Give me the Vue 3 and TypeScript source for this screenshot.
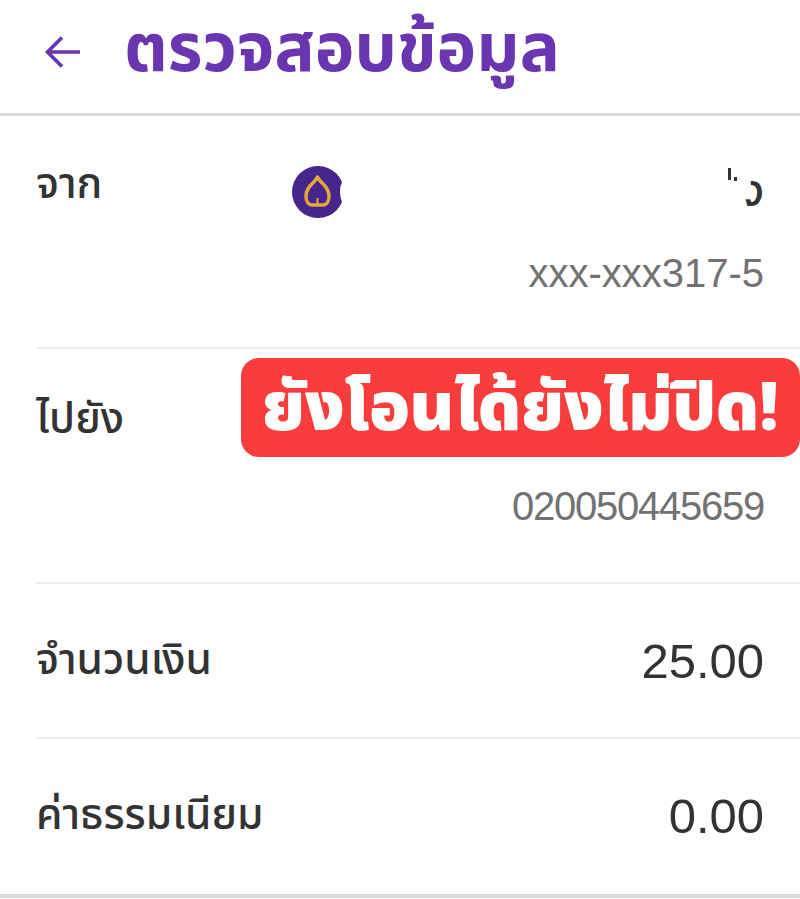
<template>
  <div class="page">
    <header class="top-bar">
      <svg class="back-icon" viewBox="0 0 40 40" width="40" height="40" fill="none">
        <path d="M37 20H5M19 5.500 4.500 20 19 34.500" stroke="#6a35b0" stroke-width="3.600" />
      </svg>
      <h1 class="title">ตรวจสอบข้อมูล</h1>
    </header>

    <section class="details">
      <div class="row row-from">
        <div class="line">
          <span class="label">จาก</span>
          <div class="account">
            <svg class="bank-logo" viewBox="0 0 52 52" width="52" height="52">
              <circle cx="26" cy="26" r="26" fill="#46258c" />
              <path d="M25.500 11C28 17 37 20 37 30C37 35 35 39 31 39H20C16 39 14 35 14 30C14 20 23 17 25.500 11Z" fill="none" stroke="#e5a63a" stroke-width="3.400" stroke-linejoin="round" />
              <path d="M25.500 32V39" stroke="#e5a63a" stroke-width="2" />
              <ellipse cx="55" cy="26" rx="7" ry="14" fill="#fff" />
            </svg>
            <div class="name-remnant">
              <span class="mark-bar"></span>
              <span class="mark-dot"></span>
              <span class="last-char">ง</span>
            </div>
          </div>
        </div>
        <div class="sub">xxx-xxx317-5</div>
      </div>

      <div class="row row-to">
        <div class="line">
          <span class="label">ไปยัง</span>
        </div>
        <div class="sub sub-narrow">020050445659</div>
      </div>

      <div v-for="item in amounts" :key="item.label" class="row row-amount">
        <span class="label">{{ item.label }}</span>
        <span class="amount">{{ item.value }}</span>
      </div>
    </section>

    <div class="badge">ยังโอนได้ยังไม่ปิด!</div>
  </div>
</template>

<script setup lang="ts">
interface AmountItem {
  label: string
  value: string
}

const amounts: AmountItem[] = [
  { label: 'จำนวนเงิน', value: '25.00' },
  { label: 'ค่าธรรมเนียม', value: '0.00' },
]
</script>

<style>
html,
body {
  margin: 0;
  background: #fff;
}
</style>

<style scoped>
.page {
  position: relative;
  width: 800px;
  height: 899px;
  overflow: hidden;
  background: #fff;
  font-family: "Noto Sans Thai", "Noto Sans", "Liberation Sans", sans-serif;
  color: #333;
}

.top-bar {
  display: flex;
  align-items: center;
  gap: 41px;
  height: 113px;
  padding-left: 43px;
  border-bottom: 3px solid #dcdcdc;
}

.back-icon {
  flex: none;
  margin-top: -10px;
}

.title {
  margin: -12px 0 0;
  color: #6a35b0;
  font-size: 67px;
  font-weight: 700;
  line-height: 92px;
}

.details {
  display: flex;
  flex-direction: column;
  margin-left: 36px;
}

.row {
  box-sizing: border-box;
  padding-right: 36px;
  border-bottom: 2px solid #ececec;
}

.row-from,
.row-to {
  display: flex;
  flex-direction: column;
  justify-content: space-between;
  padding-top: 43px;
}

.row-from {
  height: 233px;
  padding-bottom: 52px;
}

.row-to {
  height: 235px;
  padding-bottom: 54px;
}

.line {
  display: flex;
  align-items: flex-start;
  justify-content: space-between;
}

.label {
  font-size: 42.500px;
  font-weight: 500;
  line-height: 56px;
  color: #333;
}

.row-from .label {
  margin-top: -2px;
}

.account {
  display: flex;
  flex: 1;
  align-items: center;
  justify-content: space-between;
  margin-top: 6px;
  margin-left: 190px;
}

.name-remnant {
  display: flex;
  align-items: flex-start;
  gap: 3px;
}

.mark-bar {
  width: 3px;
  height: 12px;
  margin-top: 3px;
  background: #333;
}

.mark-dot {
  width: 3px;
  height: 4px;
  margin-top: 12px;
  background: #333;
}

.last-char {
  margin-top: 2px;
  font-size: 44px;
  font-weight: 500;
  line-height: 52px;
  color: #333;
  clip-path: polygon(45% 0, 100% 0, 100% 100%, 0 100%, 0 62%, 45% 62%);
}

.sub {
  align-self: flex-end;
  font-family: "Liberation Sans", sans-serif;
  font-size: 40px;
  line-height: 44px;
  color: #727272;
}

.sub-narrow {
  letter-spacing: -1.25px;
}

.row-amount {
  display: flex;
  align-items: center;
  justify-content: space-between;
  height: 155px;
}

.row-amount:last-child {
  height: 159px;
  margin-left: -36px;
  padding-bottom: 2px;
  padding-left: 36px;
  border-bottom: 4px solid #d9d9d9;
}

.amount {
  font-family: "Liberation Sans", sans-serif;
  font-size: 49px;
  line-height: 56px;
  color: #333;
}

.badge {
  position: absolute;
  top: 358px;
  left: 241px;
  box-sizing: border-box;
  width: 559px;
  height: 99px;
  padding-top: 4px;
  border-radius: 18px;
  background: #f93d3d;
  color: #fff;
  font-size: 67px;
  font-weight: 900;
  line-height: 95px;
  text-align: center;
  white-space: nowrap;
}
</style>
